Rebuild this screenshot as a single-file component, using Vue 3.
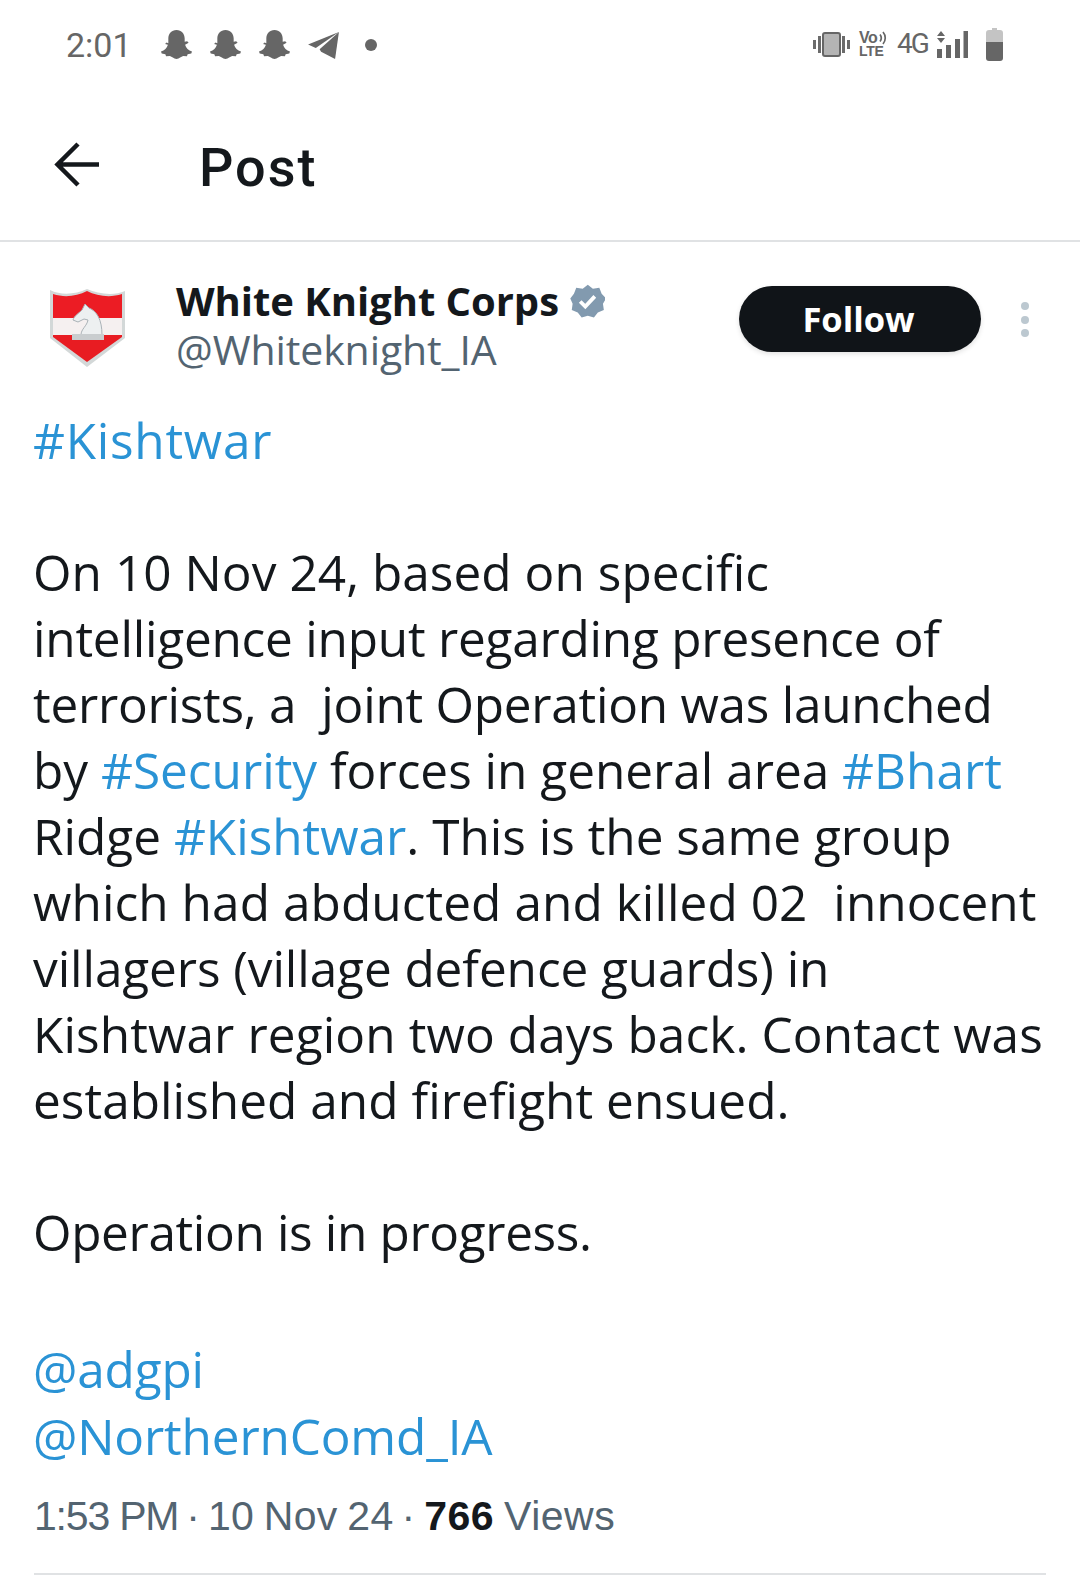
<script setup>
const snaps = [0, 1, 2]
const snapPath = 'M12 1.500c3.600 0 5.800 2.700 5.800 6v2.400l1.800-.5 1 1.100-2.500 1.500c.6 2.300 2.400 4 4.900 4.800l-.5 1.300-2.600.6-.5 1.500-2.700-.2c-1.400.4-2.700 2-4.700 2s-3.300-1.600-4.700-2l-2.700.2-.5-1.500-2.600-.6-.5-1.300c2.500-.8 4.300-2.500 4.900-4.800L3.900 11.500l1-1.100 1.300.5V7.500c0-3.300 2.200-6 5.800-6z'
</script>

<template>
  <div class="page">
    <div class="status">
      <div class="status-left">
        <span class="time">2:01</span>
        <svg v-for="s in snaps" :key="s" class="snap" viewBox="1 1.500 22 22"><path :d="snapPath" /></svg>
        <svg class="tg" viewBox="0 0 32 28">
          <path d="M32 0 0 13l8 3.500z" />
          <path d="M32 0 12 18l1.500 2.500L28 28z" />
        </svg>
        <span class="dot"></span>
      </div>
      <div class="status-right">
        <svg class="vib" viewBox="0 0 37 25">
          <path d="M0 8h3v9H0zM5 4h3v17H5zM29 4h3v17h-3zM34 8h3v9h-3z" fill="#6b6b6b" />
          <rect x="10" y="1" width="17" height="23" rx="2" fill="#b4b4b4" stroke="#666" stroke-width="2" />
        </svg>
        <div class="volte">
          <span class="vo">Vo</span>
          <svg class="arcs" viewBox="0 0 8 14"><path d="M1 3.500c1.500 2 1.500 5 0 7M4 1c3 3.500 3 8.500 0 12" fill="none" stroke="#666" stroke-width="1.700" /></svg>
          <span class="lte">LTE</span>
        </div>
        <span class="four">4G</span>
        <svg class="sig" viewBox="0 0 31 27">
          <path d="M4 0l4 5H0zM0 7h8l-4 5zM0 18h5v9H0zM9 14h5v13H9zM18 8h5v19h-5zM26.500 0h4.500v27h-4.500z" fill="#666" />
        </svg>
        <svg class="bat" viewBox="0 0 17 33">
          <path d="M6 0h5v2h3a3 3 0 0 1 3 3v9H0V5a3 3 0 0 1 3-3h3z" fill="#c4c4c4" />
          <path d="M0 14h17v16a3 3 0 0 1-3 3H3a3 3 0 0 1-3-3z" fill="#666" />
        </svg>
      </div>
    </div>

    <header class="topbar">
      <svg class="back" viewBox="0 0 46 46"><path d="M45 22.500H4M24 2 3.500 22.500 24 43" /></svg>
      <h1>Post</h1>
    </header>

    <main class="post">
      <div class="author">
        <svg class="avatar" viewBox="0 0 76 78">
          <path d="M0 1c12 6 26 4 37-1 11 5 27 7 38 2v47L37 78 0 49z" fill="#d3d8d8" />
          <path d="M3 5c12 4 24 2 34-3 10 5 23 7 35 3v24H3z" fill="#ec1c24" />
          <path d="M3 29h69v17H3z" fill="#f5f0f0" />
          <path d="M3 46h69v2L37 73 3 48z" fill="#e81c22" />
          <path d="M35 15l4 4c8 3 13 12 13 27H31c0-6 6-9 7-15l-4-1-6 3-5-2c1-4 6-7 9-10z" fill="#edf0f1" stroke="#aab2b7" stroke-width="1" />
          <path d="M22 45h32v6H22z" fill="#c9cdcf" />
        </svg>
        <div class="names">
          <div class="name-row">
            <span class="name">White Knight Corps</span>
            <svg class="badge" viewBox="0 0 24 24">
              <path d="M12 0l3.500 2.700 4.400-.6 1.600 4.100 3.100 3.200L22.400 13l.6 4.400-4.100 1.600-2.700 3.500-4.200-1.300-4.200 1.300L5.100 19 1 17.400 1.600 13 0 9.400l2.500-3.200 1.600-4.100 4.400.6z" fill="#829aaf" transform="translate(.2 .5)" />
              <path d="M7 12l3.500 3.500L17 8.500" fill="none" stroke="#fff" stroke-width="2.600" />
            </svg>
          </div>
          <div class="handle">@Whiteknight_IA</div>
        </div>
        <button class="follow">Follow</button>
        <div class="more"><i></i><i></i><i></i></div>
      </div>

      <div class="body">
        <p class="hash-top"><a>#Kishtwar</a></p>
        <p>
          <span class="ln l1">On 10 Nov 24, based on specific</span>
          <span class="ln l2">intelligence input regarding presence of</span>
          <span class="ln l3">terrorists, a&nbsp; joint Operation was launched</span>
          <span class="ln l4">by <a>#Security</a> forces in general area <a>#Bhart</a></span>
          <span class="ln">Ridge <a>#Kishtwar</a>. This is the same group</span>
          <span class="ln l6">which had abducted and killed 02&nbsp; innocent</span>
          <span class="ln l7">villagers (village defence guards) in</span>
          <span class="ln l8">Kishtwar region two days back. Contact was</span>
          <span class="ln l9">established and firefight ensued.</span>
        </p>
        <p class="op">Operation is in progress.</p>
        <p class="mentions"><a>@adgpi</a><br><a>@NorthernComd_IA</a></p>
      </div>

      <div class="meta"><span class="m-time">1:53 PM</span><span class="sep">·</span><span class="m-date">10 Nov 24</span><span class="sep sep2">·</span><b>766</b><span class="m-views"> Views</span></div>
      <div class="rule"></div>
    </main>
  </div>
</template>

<style>
html, body { margin: 0; background: #fff; }
</style>

<style scoped>
.page {
  width: 1080px;
  height: 1590px;
  overflow: hidden;
  background: #fff;
  font-family: "Open Sans", "Noto Sans", sans-serif;
  color: #14181c;
}
.status {
  height: 88px;
  box-sizing: border-box;
  padding: 27px 77px 0 66px;
  display: flex;
  justify-content: space-between;
  align-items: flex-start;
  color: #666;
}
.status-left { display: flex; align-items: center; gap: 18px; height: 36px; }
.time { font: 34px/36px Roboto, sans-serif; width: 62px; margin-right: 15px; color: #666; }
.snap { width: 31px; height: 31px; fill: #666; }
.tg { width: 31px; height: 27px; fill: #666; }
.dot { width: 12px; height: 12px; border-radius: 50%; background: #666; margin-left: 8px; }
.status-right { display: flex; align-items: center; height: 36px; margin-top: -1px; }
.vib { width: 37px; height: 25px; margin-right: 9px; }
.volte {
  position: relative;
  display: flex;
  flex-direction: column;
  width: 27px;
  height: 27px;
  font: 700 14px/13px "Liberation Sans", sans-serif;
  color: #666;
  margin-right: 11px;
}
.vo { font-size: 16px; line-height: 14px; letter-spacing: -.5px; }
.lte { letter-spacing: -.3px; }
.arcs { position: absolute; right: -1px; top: 0; width: 8px; height: 14px; }
.four {
  font: 400 28px/36px Roboto, sans-serif;
  color: #666;
  margin-right: 11px;
  width: 29px;
  letter-spacing: -2px;
}
.sig { width: 31px; height: 27px; margin-right: 18px; }
.bat { width: 17px; height: 33px; }
.topbar {
  height: 154px;
  box-sizing: border-box;
  border-bottom: 2px solid #e0e2e4;
  display: flex;
  align-items: flex-start;
  padding: 54px 0 0 54px;
}
.back { width: 46px; height: 46px; fill: none; stroke: #14181c; stroke-width: 4.500px; }
h1 {
  margin: -10px 0 0 99px;
  font: 500 54px/72px Roboto, sans-serif;
  letter-spacing: 2px;
  color: #14181c;
}
.post { padding: 0 34px; }
.author { height: 157px; display: flex; align-items: flex-start; }
.avatar { width: 76px; height: 78px; margin: 47px 0 0 16px; flex: none; }
.names { margin: 34px 0 0 50px; flex: 1; }
.name-row { display: flex; align-items: center; height: 50px; }
.name { font-size: 40px; font-weight: 700; line-height: 50px; letter-spacing: -.05px; color: #14181c; }
.badge { width: 35px; height: 35px; margin-left: 11px; }
.handle { font-size: 41px; line-height: 47px; color: #536471; letter-spacing: -.1px; }
.follow {
  width: 242px;
  height: 66px;
  margin-top: 44px;
  border: 0;
  padding: 0 3px 0 0;
  border-radius: 33px;
  background: #101418;
  color: #fff;
  font: 700 34.500px/66px "Open Sans", sans-serif;
  box-shadow: 0 2px 5px rgba(0, 0, 0, .12);
}
.more { display: flex; flex-direction: column; gap: 5.500px; margin: 60px 17px 0 40px; }
.more i { width: 8px; height: 8px; border-radius: 50%; background: #bcc8d0; }
.body { margin-left: -1px; font-size: 49.500px; line-height: 66px; color: #14181c; white-space: nowrap; }
.body p { margin: 0 0 66px; }
.body a { color: #2a93d5; }
.ln { display: block; }
.hash-top { padding-top: 8px; letter-spacing: .75px; }
.l1 { letter-spacing: .06px; }
.l2 { letter-spacing: -.22px; }
.l3 { letter-spacing: -.25px; }
.l4 { letter-spacing: 0; }
.l6 { letter-spacing: .08px; }
.l7 { letter-spacing: -.08px; }
.l8 { letter-spacing: .12px; }
.l9 { letter-spacing: .05px; }
.body .op { letter-spacing: -.35px; margin-bottom: 71px; }
.body .mentions { margin: 0; line-height: 67px; letter-spacing: -.15px; }
.meta {
  margin-top: 18px;
  font: 400 41px/56px "Liberation Sans", sans-serif;
  color: #536471;
  white-space: pre;
}
.m-time { letter-spacing: -1.200px; }
.sep { margin: 0 8px; }
.sep2 { margin-right: 9px; }
.m-date { letter-spacing: .3px; word-spacing: -2px; }
.meta b { font-weight: 700; color: #14181c; letter-spacing: .5px; }
.m-views { letter-spacing: .5px; word-spacing: -2px; }
.rule { height: 2px; background: #e0e2e4; margin-top: 29px; }
</style>
